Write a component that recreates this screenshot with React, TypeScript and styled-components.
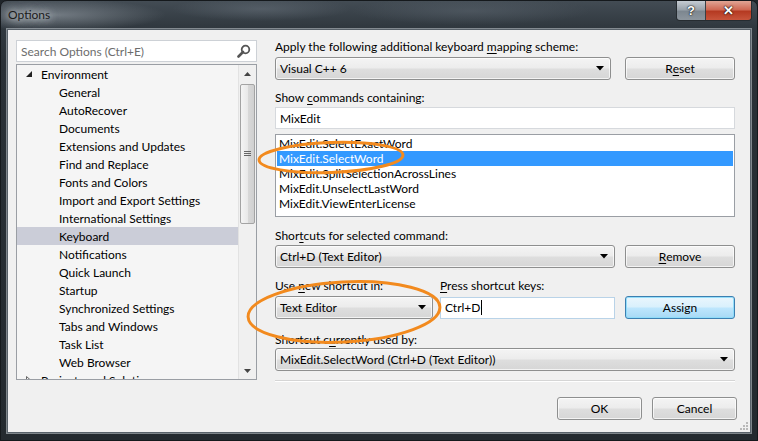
import React from 'react';
import styled, { createGlobalStyle } from 'styled-components';

const GlobalStyle = createGlobalStyle`
  html, body {
    margin: 0;
    padding: 0;
    background: #1f252a;
  }
  body {
    font-family: Lato, 'Liberation Sans', sans-serif;
    font-size: 12px;
    color: #000;
  }
`;

const Frame = styled.div`
  position: relative;
  box-sizing: border-box;
  width: 758px;
  height: 441px;
  padding: 0 6px 7px 6px;
  display: flex;
  flex-direction: column;
  border: 1px solid #15191c;
  border-radius: 7px 7px 0 0;
  background:
    radial-gradient(ellipse 110px 16px at 55px 14px, rgba(170, 178, 186, 0.5), transparent),
    radial-gradient(ellipse 90px 12px at 260px 8px, rgba(110, 120, 130, 0.45), transparent),
    radial-gradient(ellipse 120px 14px at 470px 10px, rgba(100, 110, 120, 0.4), transparent),
    linear-gradient(180deg, #434c54 0, #30383f 26px, #2a3137 60px, #242a2f 100%);
`;

const TitleBar = styled.div`
  height: 28px;
  display: flex;
  align-items: flex-start;
  justify-content: space-between;
`;

const Title = styled.div`
  margin: 6px 0 0 1px;
  font-size: 12px;
  line-height: 15px;
  color: #1b1b1b;
  text-shadow: 0 0 6px #c9ced3, 0 0 10px #c9ced3, 0 0 14px #b8bec4;
`;

const Caption = styled.div`
  display: flex;
  margin-right: -1px;
  border: 1px solid #262c31;
  border-top: none;
  border-radius: 0 0 4px 4px;
  overflow: hidden;
`;

const CaptionButton = styled.div<{ $close?: boolean }>`
  width: ${(p) => (p.$close ? 45 : 28)}px;
  height: 19px;
  display: flex;
  align-items: center;
  justify-content: center;
  color: #fff;
  font-family: 'Liberation Sans', sans-serif;
  font-weight: bold;
  font-size: 13px;
  text-shadow: 0 0 2px #000, 0 0 1px #000;
  border-left: ${(p) => (p.$close ? '1px solid #3a3f44' : 'none')};
  background: ${(p) =>
    p.$close
      ? 'linear-gradient(180deg, #e0a595 0, #cf6a55 45%, #b53a22 55%, #c8553c 100%)'
      : 'linear-gradient(180deg, #c5ccd3 0, #9aa3ab 45%, #7d8790 55%, #8d969e 100%)'};
`;

const Client = styled.div`
  position: relative;
  flex: 1;
  display: grid;
  grid-template-columns: 241px 460px;
  column-gap: 18px;
  padding: 10px 15px 0 8px;
  background: #f0f0f0;
  border: 1px solid #59626a;
  box-shadow: 0 0 0 1px rgba(200, 208, 214, 0.55);
`;

const LeftCol = styled.div`
  display: flex;
  flex-direction: column;
  gap: 2px;
`;

const SearchBox = styled.div`
  box-sizing: border-box;
  height: 22px;
  display: flex;
  align-items: center;
  justify-content: space-between;
  padding: 0 5px 0 4px;
  background: #fff;
  border: 1px solid #cdd1d6;
  color: #6d6d6d;
`;

const Tree = styled.div`
  box-sizing: border-box;
  height: 316px;
  display: flex;
  background: #f5f5f5;
  border: 1px solid #9a9ea4;
  overflow: hidden;
`;

const TreeBody = styled.div`
  flex: 1;
  overflow: hidden;
`;

const TreeRow = styled.div<{ $level: number; $selected?: boolean }>`
  height: 18px;
  display: flex;
  align-items: center;
  padding-left: ${(p) => (p.$level === 0 ? 9 : 42)}px;
  background: ${(p) => (p.$selected ? '#cbcdd8' : 'transparent')};
  white-space: nowrap;
`;

const Expander = styled.span`
  width: 15px;
  display: inline-flex;
  align-items: center;
`;

const ScrollBar = styled.div`
  width: 17px;
  display: flex;
  flex-direction: column;
  align-items: center;
  background: #f0f0f0;
  border-left: 1px solid #e2e2e2;
`;

const ScrollArrow = styled.div`
  height: 17px;
  width: 100%;
  display: flex;
  align-items: center;
  justify-content: center;
`;

const Thumb = styled.div`
  box-sizing: border-box;
  width: 15px;
  height: 140px;
  margin-top: 2px;
  display: flex;
  align-items: center;
  justify-content: center;
  border: 1px solid #a3a3a3;
  border-radius: 2px;
  background: linear-gradient(90deg, #f4f4f4 0, #e9e9e9 50%, #d9d9d9 51%, #d0d0d0 100%);
`;

const Spacer = styled.div`
  flex: 1;
`;

const RightCol = styled.div`
  display: flex;
  flex-direction: column;
`;

const Label = styled.div<{ $mt?: number }>`
  line-height: 15px;
  margin-top: ${(p) => p.$mt ?? 0}px;
  white-space: nowrap;
  u {
    text-underline-offset: 2px;
  }
`;

const Row = styled.div<{ $mt?: number; $gap?: number }>`
  display: flex;
  align-items: center;
  gap: ${(p) => p.$gap ?? 10}px;
  margin-top: ${(p) => p.$mt ?? 0}px;
`;

const Combo = styled.div<{ $w: number }>`
  box-sizing: border-box;
  width: ${(p) => p.$w}px;
  height: 23px;
  display: flex;
  align-items: center;
  justify-content: space-between;
  padding: 0 6px 0 4px;
  border: 1px solid #8e8f8f;
  border-radius: 3px;
  background: linear-gradient(180deg, #f4f4f4 0, #ececec 48%, #dedede 52%, #d6d6d6 100%);
  box-shadow: inset 0 0 0 1px rgba(255, 255, 255, 0.7);
`;

const Button = styled.div<{ $w: number; $default?: boolean }>`
  box-sizing: border-box;
  width: ${(p) => p.$w}px;
  height: 23px;
  display: flex;
  align-items: center;
  justify-content: center;
  border: 1px solid ${(p) => (p.$default ? '#3c7fb1' : '#8e8f8f')};
  border-radius: 3px;
  background: ${(p) =>
    p.$default
      ? 'linear-gradient(180deg, #eaf6fd 0, #d9f0fc 48%, #bee6fd 52%, #a7d9f5 100%)'
      : 'linear-gradient(180deg, #f4f4f4 0, #ececec 48%, #dedede 52%, #d6d6d6 100%)'};
  box-shadow: inset 0 0 0 1px
    ${(p) => (p.$default ? 'rgba(140, 220, 250, 0.9)' : 'rgba(255, 255, 255, 0.7)')};
  u {
    text-underline-offset: 2px;
  }
`;

const TextBox = styled.div<{ $w?: number; $focus?: boolean; $mt?: number }>`
  box-sizing: border-box;
  width: ${(p) => (p.$w ? `${p.$w}px` : '100%')};
  height: 22px;
  margin-top: ${(p) => p.$mt ?? 0}px;
  display: flex;
  align-items: center;
  padding: 0 4px;
  background: #fff;
  border: 1px solid ${(p) => (p.$focus ? '#b9d3e8' : '#d6d9dd')};
`;

const Caret = styled.span`
  display: inline-block;
  width: 1px;
  height: 15px;
  margin-left: 1px;
  background: #000;
`;

const ListBox = styled.div`
  box-sizing: border-box;
  height: 83px;
  margin-top: 5px;
  padding: 1px;
  background: #fff;
  border: 1px solid #9a9ea4;
`;

const ListItem = styled.div<{ $selected?: boolean }>`
  height: 15px;
  line-height: 15px;
  padding-left: 2px;
  color: ${(p) => (p.$selected ? '#fff' : '#000')};
  background: ${(p) => (p.$selected ? '#3399ff' : 'transparent')};
`;

const Separator = styled.div`
  height: 1px;
  margin-top: 9px;
  background: #d5d5d5;
  border-bottom: 1px solid #fff;
`;

const Footer = styled.div`
  display: flex;
  justify-content: flex-end;
  gap: 10px;
  margin: 15px -2px 0 0;
`;

const Annotation = styled.svg`
  position: absolute;
  left: 0;
  top: 0;
  pointer-events: none;
`;

const Grip = styled.svg`
  position: absolute;
  right: 1px;
  bottom: 1px;
`;

const DownArrow = () => (
  <svg width="8" height="5" viewBox="0 0 8 5">
    <path d="M0 0 H8 L4 4.5 Z" fill="#000" />
  </svg>
);

const ScrollGlyph = ({ up }: { up?: boolean }) => (
  <svg width="7" height="4" viewBox="0 0 7 4">
    <path d={up ? 'M0 4 H7 L3.5 0 Z' : 'M0 0 H7 L3.5 4 Z'} fill="#444" />
  </svg>
);

const treeItems = [
  'General',
  'AutoRecover',
  'Documents',
  'Extensions and Updates',
  'Find and Replace',
  'Fonts and Colors',
  'Import and Export Settings',
  'International Settings',
  'Keyboard',
  'Notifications',
  'Quick Launch',
  'Startup',
  'Synchronized Settings',
  'Tabs and Windows',
  'Task List',
  'Web Browser',
];

const commands = [
  'MixEdit.SelectExactWord',
  'MixEdit.SelectWord',
  'MixEdit.SplitSelectionAcrossLines',
  'MixEdit.UnselectLastWord',
  'MixEdit.ViewEnterLicense',
];

export default function App() {
  return (
    <>
      <GlobalStyle />
      <Frame>
        <TitleBar>
          <Title>Options</Title>
          <Caption>
            <CaptionButton>?</CaptionButton>
            <CaptionButton $close>✕</CaptionButton>
          </Caption>
        </TitleBar>
        <Client>
          <LeftCol>
            <SearchBox>
              <span>Search Options (Ctrl+E)</span>
              <svg width="14" height="14" viewBox="0 0 14 14">
                <circle cx="8.5" cy="5.5" r="3.8" fill="none" stroke="#555" strokeWidth="1.8" />
                <path d="M6 8 L1.5 12.5" stroke="#555" strokeWidth="2.6" strokeLinecap="round" />
              </svg>
            </SearchBox>
            <Tree>
              <TreeBody>
                <TreeRow $level={0}>
                  <Expander>
                    <svg width="6" height="6" viewBox="0 0 6 6">
                      <path d="M6 0 V6 H0 Z" fill="#222" />
                    </svg>
                  </Expander>
                  Environment
                </TreeRow>
                {treeItems.map((t) => (
                  <TreeRow key={t} $level={1} $selected={t === 'Keyboard'}>
                    {t}
                  </TreeRow>
                ))}
                <TreeRow $level={0}>
                  <Expander>
                    <svg width="5" height="8" viewBox="0 0 5 8">
                      <path d="M0.5 0.5 L4.5 4 L0.5 7.5 Z" fill="none" stroke="#666" />
                    </svg>
                  </Expander>
                  Projects and Solutions
                </TreeRow>
              </TreeBody>
              <ScrollBar>
                <ScrollArrow>
                  <ScrollGlyph up />
                </ScrollArrow>
                <Thumb>
                  <svg width="7" height="6" viewBox="0 0 7 6">
                    <path d="M0 0.5 H7 M0 2.5 H7 M0 4.5 H7" stroke="#666" />
                  </svg>
                </Thumb>
                <Spacer />
                <ScrollArrow>
                  <ScrollGlyph />
                </ScrollArrow>
              </ScrollBar>
            </Tree>
          </LeftCol>

          <RightCol>
            <Label $mt={-1}>
              Apply the following additional keyboard <u>m</u>apping scheme:
            </Label>
            <Row $mt={3} $gap={14}>
              <Combo $w={336}>
                Visual C++ 6
                <DownArrow />
              </Combo>
              <Button $w={110}>
                R<u>e</u>set
              </Button>
            </Row>
            <Label $mt={10}>
              Show <u>c</u>ommands containing:
            </Label>
            <TextBox $mt={2}>MixEdit</TextBox>
            <ListBox>
              {commands.map((c) => (
                <ListItem key={c} $selected={c === 'MixEdit.SelectWord'}>
                  {c}
                </ListItem>
              ))}
            </ListBox>
            <Label $mt={11}>
              Shor<u>t</u>cuts for selected command:
            </Label>
            <Row $mt={2}>
              <Combo $w={340}>
                Ctrl+D (Text Editor)
                <DownArrow />
              </Combo>
              <Button $w={110}>
                <u>R</u>emove
              </Button>
            </Row>
            <Row $mt={10} $gap={0}>
              <Label style={{ width: 165 }}>
                Use <u>n</u>ew shortcut in:
              </Label>
              <Label>
                <u>P</u>ress shortcut keys:
              </Label>
            </Row>
            <Row $mt={3} $gap={7}>
              <Combo $w={158}>
                Text Editor
                <DownArrow />
              </Combo>
              <TextBox $w={175} $focus>
                Ctrl+D
                <Caret />
              </TextBox>
              <Button $w={110} $default style={{ marginLeft: 3 }}>
                Assign
              </Button>
            </Row>
            <Label $mt={13}>
              Shortcut c<u>u</u>rrently used by:
            </Label>
            <Row $mt={1}>
              <Combo $w={460}>
                MixEdit.SelectWord (Ctrl+D (Text Editor))
                <DownArrow />
              </Combo>
            </Row>
            <Separator />
            <Footer>
              <Button $w={85}>OK</Button>
              <Button $w={85}>Cancel</Button>
            </Footer>
          </RightCol>

          <Grip width="12" height="12" viewBox="0 0 12 12">
            {[
              [9, 3],
              [9, 6],
              [6, 6],
              [9, 9],
              [6, 9],
              [3, 9],
            ].map(([x, y]) => (
              <rect key={`${x}-${y}`} x={x} y={y} width="2" height="2" fill="#b8b8b8" />
            ))}
          </Grip>
        </Client>

        <Annotation width="758" height="441" viewBox="0 0 758 441">
          <ellipse
            cx="330"
            cy="156.5"
            rx="72"
            ry="15"
            fill="none"
            stroke="#f28a1e"
            strokeWidth="3"
            transform="rotate(-2 330 156.5)"
          />
          <ellipse
            cx="343"
            cy="311"
            rx="96"
            ry="30"
            fill="none"
            stroke="#f28a1e"
            strokeWidth="3"
            transform="rotate(-3 343 311)"
          />
        </Annotation>
      </Frame>
    </>
  );
}
